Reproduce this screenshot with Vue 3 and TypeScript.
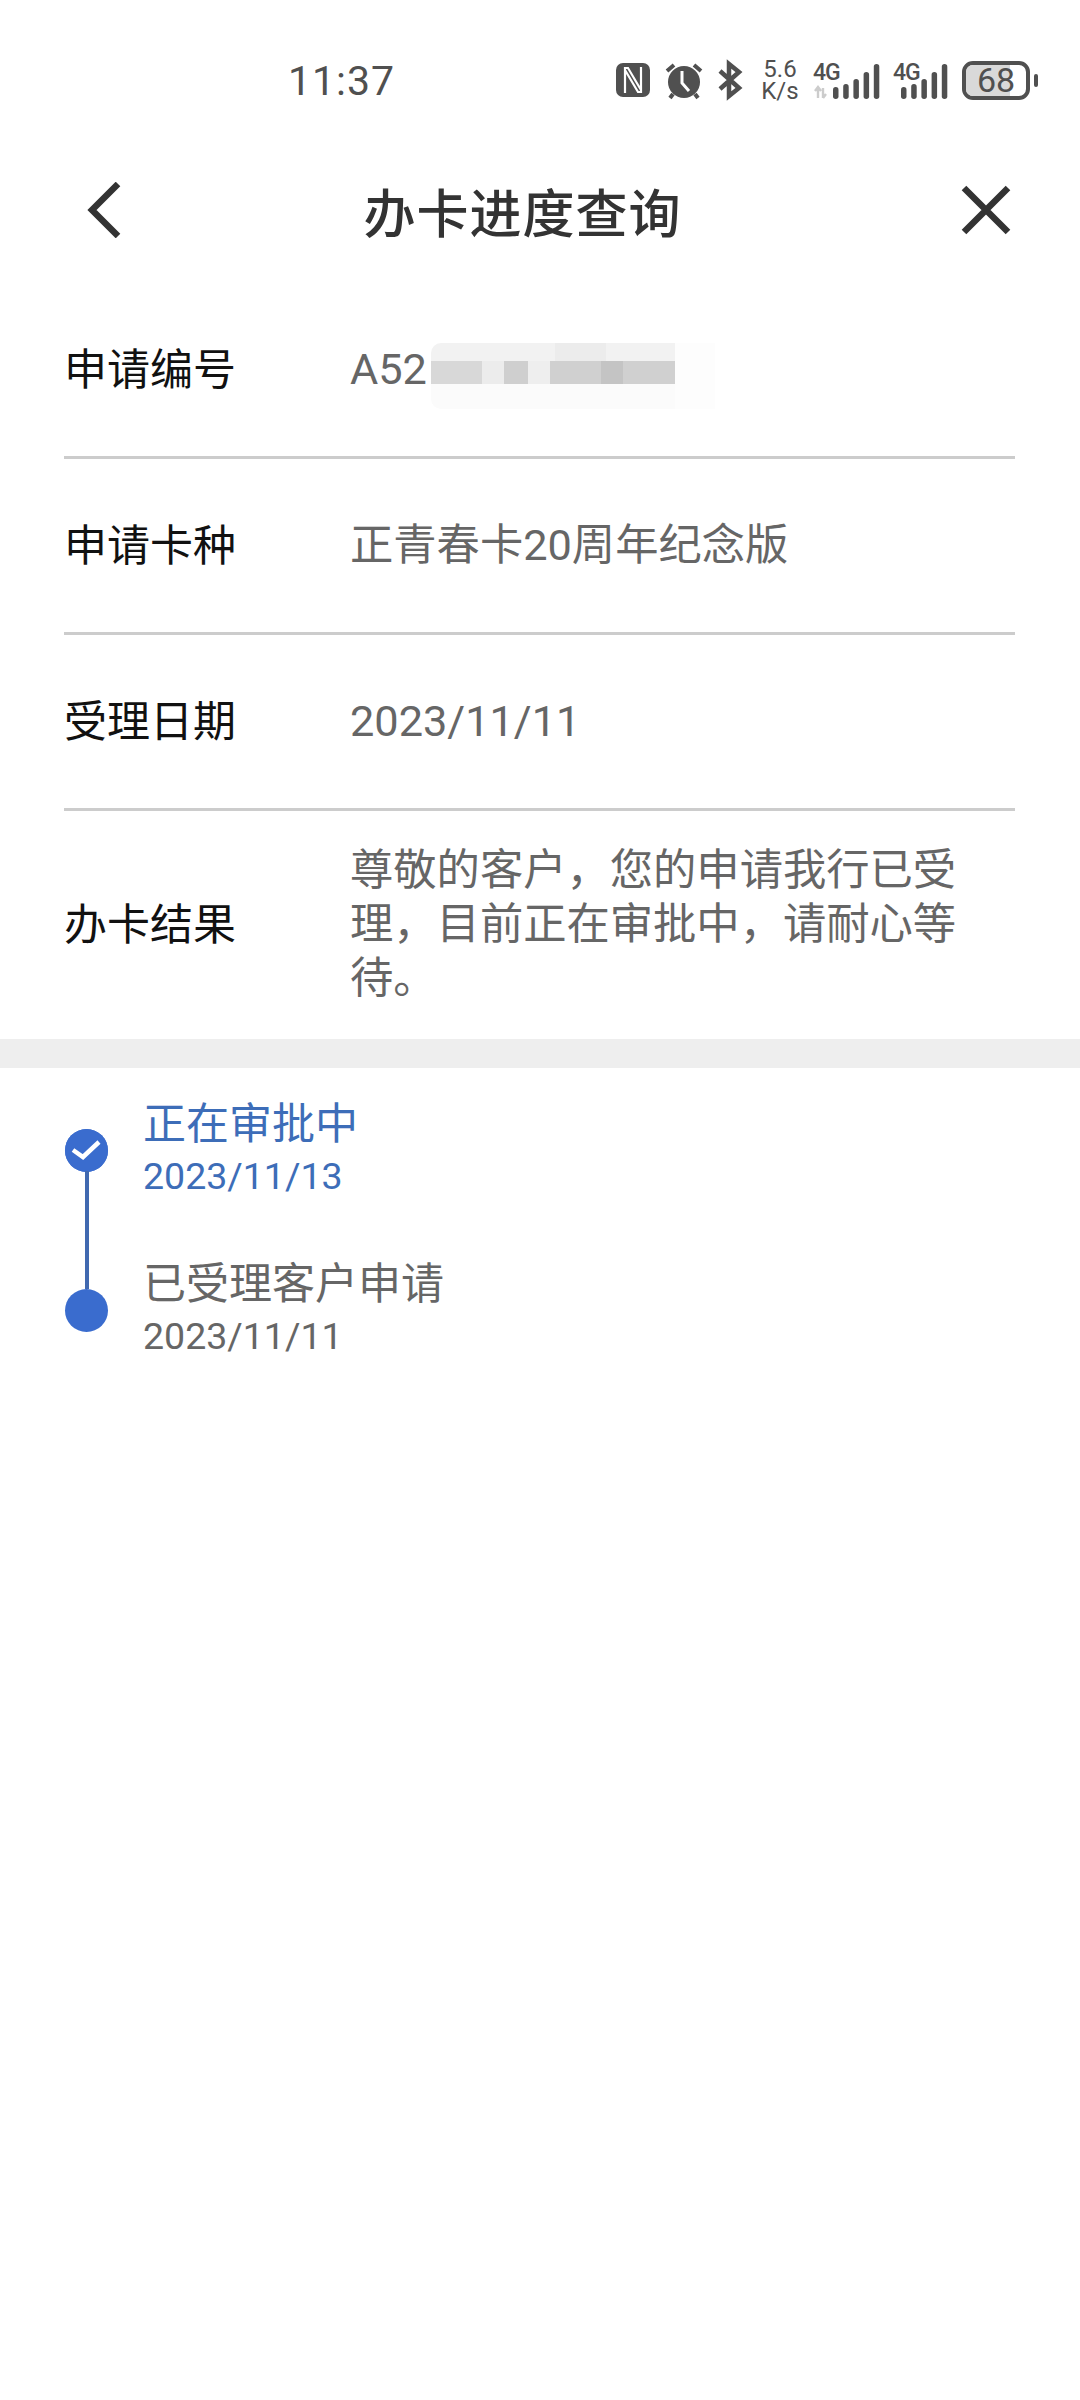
<script setup lang="ts">
interface InfoRow {
    label: string,
    value: string,
    tall?: boolean,
}

interface TimelineItem {
    title: string,
    date: string,
    active?: boolean,
}

const rows: InfoRow[] = [
    { label: '申请编号', value: 'A52' },
    { label: '申请卡种', value: '正青春卡20周年纪念版' },
    { label: '受理日期', value: '2023/11/11' },
    { label: '办卡结果', value: '尊敬的客户，您的申请我行已受理，目前正在审批中，请耐心等待。', tall: true },
];

const timeline: TimelineItem[] = [
    { title: '正在审批中', date: '2023/11/13', active: true },
    { title: '已受理客户申请', date: '2023/11/11' },
];

// mosaic over the application number: x, y, w, h, colour
const mosaic: [number, number, number, number, string][] = [
    [0, 0, 244, 18, '#f2f2f2'],
    [124, 0, 51, 18, '#ececec'],
    [0, 18, 51, 23, '#d8d8d8'],
    [51, 18, 22, 23, '#ececec'],
    [73, 18, 24, 23, '#cfcfcf'],
    [97, 18, 22, 23, '#eeeeee'],
    [119, 18, 51, 23, '#d0d0d0'],
    [170, 18, 22, 23, '#c4c4c4'],
    [192, 18, 52, 23, '#d0d0d0'],
    [0, 41, 244, 25, '#fbfbfb'],
    [244, 0, 40, 66, '#fdfdfd'],
];

const signalHeights = [12, 15, 20, 27, 35];

// x of each bar, the second indicator packs its bars under the 4G label
const barsFrom = (start: number) =>
    signalHeights.map((h, i) => ({ x: start + i * 10.2, h }));

const signalA = barsFrom(20);
const signalB = barsFrom(8);
</script>

<template>
    <div class="page">
        <div class="status-bar">
            <span class="clock">11:37</span>
            <div class="status-icons">
                <svg width="34" height="34" viewBox="0 0 34 34">
                    <rect width="34" height="34" rx="7" fill="#505050" />
                    <path d="M9 30V5H12L25 27M25 4V29H22L9 7" stroke="#fff" stroke-width="2.2" fill="none" />
                </svg>
                <svg width="38" height="37" viewBox="0 0 38 37">
                    <circle cx="19" cy="20" r="16" fill="#505050" />
                    <path d="M17 9V21L24 29" stroke="#fff" stroke-width="3" fill="none" />
                    <path d="M2 9 9 3M36 9 29 3M8 32 5 36M30 32 33 36" stroke="#505050" stroke-width="4" fill="none" />
                </svg>
                <svg class="gap-wide" width="24" height="36" viewBox="0 0 24 36">
                    <path d="M2 9 21 26 11 34V2L21 10 2 27" stroke="#505050" stroke-width="4.5" fill="none" />
                </svg>
                <div class="speed"><span>5.6</span><span>K/s</span></div>
                <svg width="65" height="38" viewBox="0 0 65 38">
                    <text x="0" y="19" class="net-text">4G</text>
                    <path d="M5 27V37M2 30 5 26 8 30M10 37V27M10 37 13 33" stroke="#cccccc" stroke-width="2.4" fill="none" />
                    <rect v-for="bar in signalA" :key="bar.x" :x="bar.x" :y="38 - bar.h" width="5.5" :height="bar.h" rx="2.7" fill="#505050" />
                </svg>
                <svg width="54" height="38" viewBox="0 0 54 38">
                    <text x="0" y="19" class="net-text">4G</text>
                    <rect v-for="bar in signalB" :key="bar.x" :x="bar.x" :y="38 - bar.h" width="5.5" :height="bar.h" rx="2.7" fill="#505050" />
                </svg>
                <div class="battery-wrap">
                    <div class="battery">
                        <div class="battery-fill"></div>
                        <span class="battery-num">68</span>
                    </div>
                    <div class="battery-nub"></div>
                </div>
            </div>
        </div>

        <div class="nav-bar">
            <svg width="36" height="56" viewBox="0 0 36 56">
                <path d="M32 2 6 28 32 54" stroke="#333" stroke-width="6.5" fill="none" />
            </svg>
            <span class="nav-title">办卡进度查询</span>
            <svg width="50" height="50" viewBox="0 0 50 50">
                <path d="M3 3 47 47M47 3 3 47" stroke="#333" stroke-width="6.5" fill="none" />
            </svg>
        </div>

        <div class="info">
            <div v-for="row in rows" :key="row.label" class="info-row" :class="{ tall: row.tall }">
                <span class="info-label">{{ row.label }}</span>
                <div class="info-value">
                    {{ row.value }}
                    <div v-if="row.value === 'A52'" class="mosaic">
                        <i v-for="(m, i) in mosaic" :key="i" class="mosaic-cell"
                            :style="{ left: m[0] + 'px', top: m[1] + 'px', width: m[2] + 'px', height: m[3] + 'px', background: m[4] }"></i>
                    </div>
                </div>
            </div>
        </div>

        <div class="section-gap"></div>

        <div class="timeline">
            <div v-for="(item, index) in timeline" :key="item.title" class="timeline-item" :class="{ active: item.active }">
                <div class="timeline-node">
                    <svg v-if="item.active" width="43" height="43" viewBox="0 0 43 43">
                        <circle cx="21.5" cy="21.5" r="21.5" fill="#3a6cce" />
                        <path d="M8 21 18 28 34 13" stroke="#fff" stroke-width="4.5" fill="none" />
                    </svg>
                    <i v-if="index < timeline.length - 1" class="timeline-line"></i>
                </div>
                <div class="timeline-text">
                    <span class="timeline-title">{{ item.title }}</span>
                    <span class="timeline-date">{{ item.date }}</span>
                </div>
            </div>
        </div>
    </div>
</template>

<style scoped>
.page {
    width: 1080px;
    height: 2400px;
    background: #ffffff;
    overflow: hidden;
    font-family: Roboto, "Noto Sans CJK SC", sans-serif;
}

.status-bar {
    display: flex;
    align-items: center;
    justify-content: space-between;
    height: 80px;
    padding: 40px 42px 0 288px;
    color: #505050;
}

.clock {
    font-size: 41px;
    letter-spacing: 1px;
    margin-top: 2px;
}

.status-icons {
    display: flex;
    align-items: center;
    gap: 15px;
}

.status-icons svg {
    overflow: visible;
}

.gap-wide {
    margin-right: 3px;
}

.speed {
    display: flex;
    flex-direction: column;
    align-items: center;
    font-size: 24px;
    line-height: 22px;
    width: 40px;
    margin-right: -2px;
}

.net-text {
    font-size: 23px;
    font-weight: 500;
    letter-spacing: -1px;
    fill: #505050;
}

.battery-wrap {
    display: flex;
    align-items: center;
    gap: 4px;
}

.battery {
    position: relative;
    width: 68px;
    height: 39px;
    border: 4px solid #505050;
    border-radius: 11px;
    box-sizing: border-box;
    overflow: hidden;
    display: flex;
    align-items: center;
    justify-content: center;
}

.battery-fill {
    position: absolute;
    left: 0;
    top: 0;
    bottom: 0;
    width: 74%;
    background: #d9d9d9;
}

.battery-num {
    position: relative;
    font-size: 34px;
    line-height: 30px;
}

.battery-nub {
    width: 4px;
    height: 13px;
    border-radius: 2px;
    background: #505050;
}

.nav-bar {
    display: flex;
    align-items: center;
    justify-content: space-between;
    height: 90px;
    margin-top: 45px;
    padding: 0 69px 0 86px;
}

.nav-title {
    font-size: 52px;
    font-weight: 500;
    color: #333333;
    letter-spacing: 1px;
    margin-right: 38px;
    font-family: "Noto Sans CJK SC", sans-serif;
}

.info {
    margin-top: 28px;
}

.info-row {
    display: flex;
    align-items: center;
    height: 176px;
    margin: 0 65px 0 64px;
    border-bottom: 3px solid #cccccc;
    box-sizing: border-box;
}

.info-row.tall {
    height: 228px;
    border-bottom: none;
}

.info-label {
    width: 286px;
    flex-shrink: 0;
    color: #111111;
    font-size: 43px;
    line-height: 54px;
}

.info-value {
    position: relative;
    width: 620px;
    color: #666666;
    font-size: 43.3px;
    line-height: 54px;
}

.mosaic {
    position: absolute;
    left: 81px;
    top: 0;
    width: 284px;
    height: 66px;
    border-radius: 10px 0 0 10px;
    overflow: hidden;
}

.mosaic-cell {
    position: absolute;
    display: block;
}

.section-gap {
    height: 29px;
    background: #eeeeee;
}

.timeline {
    padding: 31px 0 0 65px;
}

.timeline-item {
    display: flex;
    height: 160px;
    color: #666666;
}

.timeline-item.active {
    color: #3d6db8;
}

.timeline-node {
    position: relative;
    width: 43px;
    height: 43px;
    margin-top: 30px;
    margin-right: 35px;
    border-radius: 50%;
    background: #3a6cce;
}

.timeline-line {
    position: absolute;
    left: 20px;
    top: 42px;
    width: 4px;
    height: 118px;
    background: #4169b0;
}

.timeline-text {
    display: flex;
    flex-direction: column;
}

.timeline-title {
    font-size: 43px;
    line-height: 50px;
}

.timeline-date {
    font-size: 37.5px;
    line-height: 52px;
    margin-top: 1px;
}
</style>
